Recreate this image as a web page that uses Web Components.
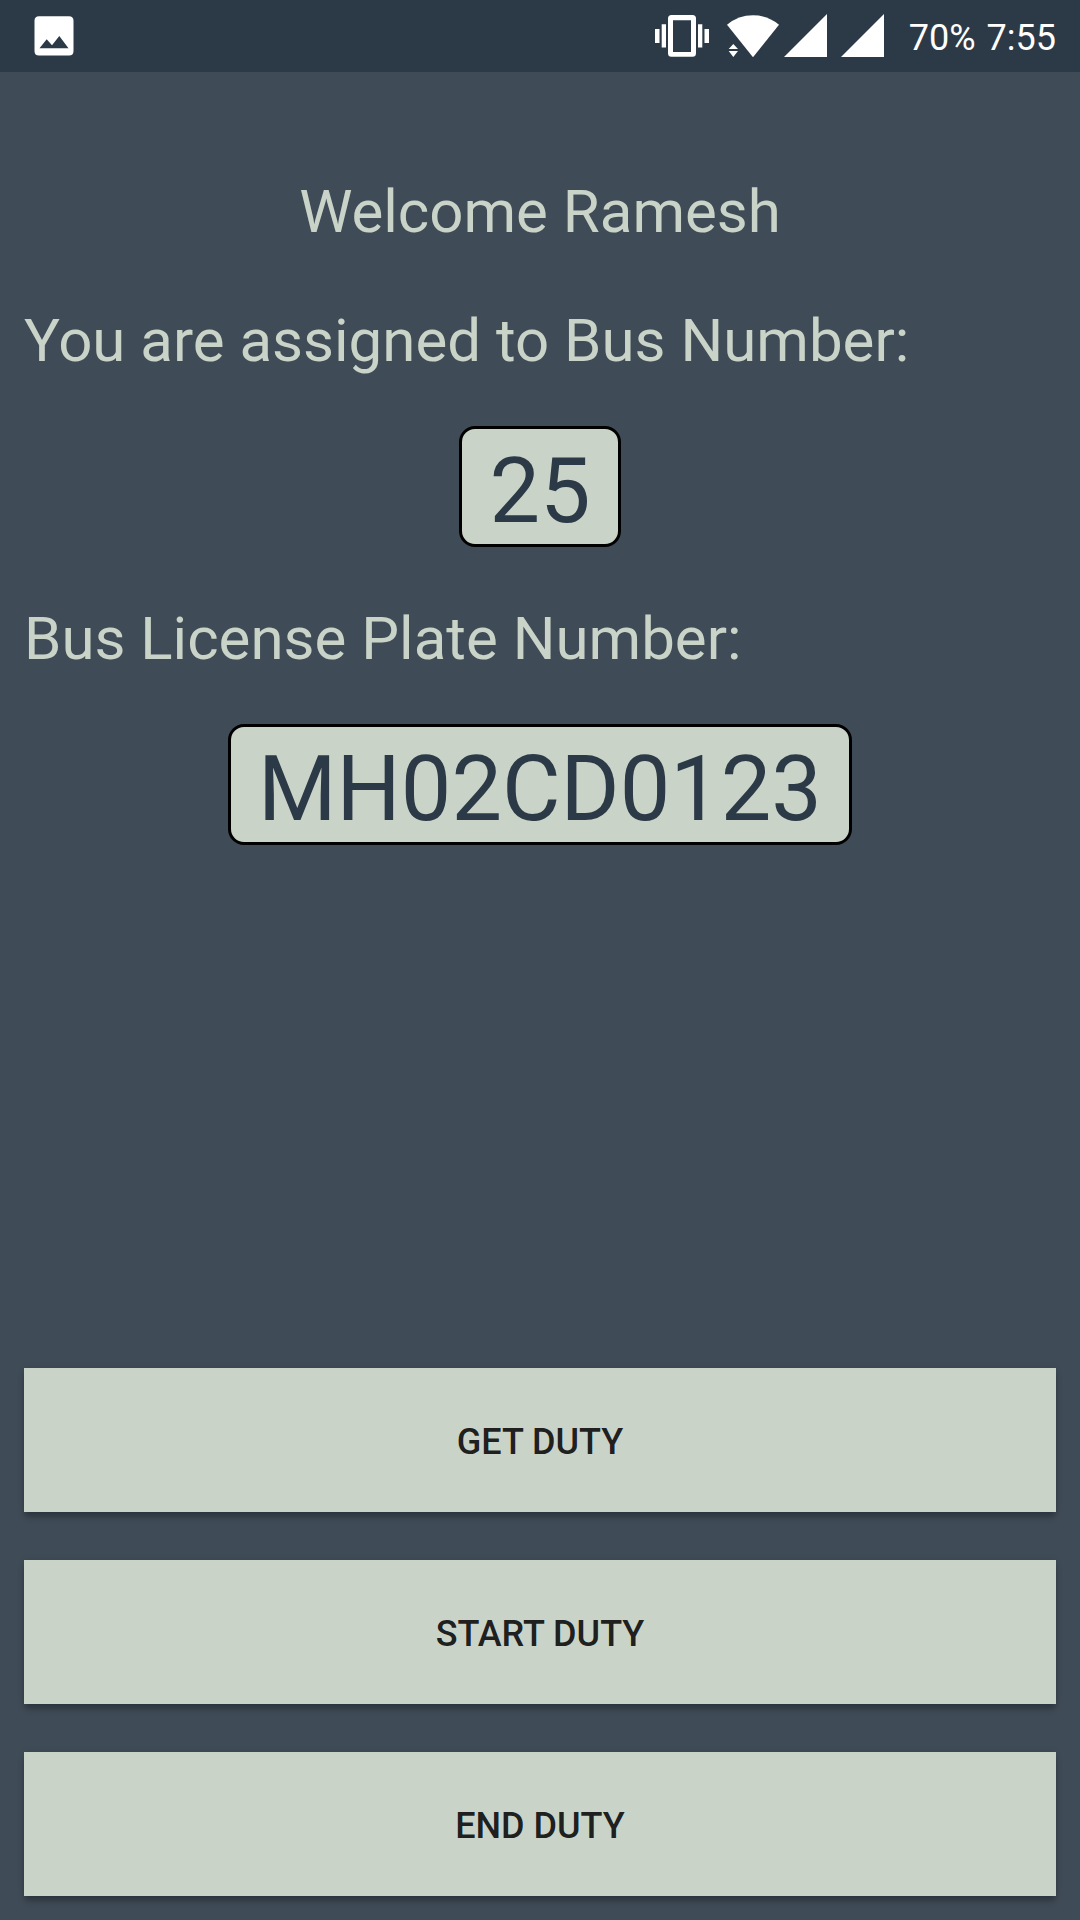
<!DOCTYPE html>
<html lang="en">
<head>
<meta charset="utf-8">
<meta name="viewport" content="width=device-width, initial-scale=1">
<title>Driver duty</title>
<style>
  :root {
    --bar: #2c3a47;
    --page: #3f4b56;
    --sage: #c9d3c8;
  }
  html, body { margin: 0; }
  body { background: var(--page); font-family: Roboto, "Noto Sans", sans-serif; }
</style>
</head>
<body>
<duty-screen></duty-screen>

<script>
  const define = (name, markup) => {
    const template = document.createElement("template");
    template.innerHTML = markup;
    customElements.define(name, class extends HTMLElement {
      constructor() {
        super();
        this.attachShadow({ mode: "open" }).append(template.content.cloneNode(true));
      }
    });
  };

  define("status-bar", `
    <style>
      :host { display: flex; align-items: center; justify-content: space-between;
              height: 72px; padding: 0 24px 0 34px; background: var(--bar); color: #fff;
              font-size: 36px; line-height: 42px; }
      svg { display: block; fill: #fff; }
      .system { display: flex; align-items: center; }
      .signals { display: flex; gap: 14px; margin: 0 25px 0 5px; }
      .wifi { margin-left: 18px; }
      .readings { display: flex; gap: 11px; padding-top: 4px; }
    </style>
    <svg width="40" height="40" viewBox="34 16 40 40" role="img" aria-label="Screenshot saved">
      <path fill-rule="evenodd" d="M39 16.3H69Q73.5 16.3 73.5 20.8V51Q73.5 55.5 69 55.5H39Q34.5 55.5 34.5 51V20.8Q34.5 16.3 39 16.3ZM39.5 48.3H68.5L59.3 36L52 45.3L46.7 39.2Z"/>
    </svg>
    <div class="system">
      <svg width="54" height="44" viewBox="655 14 54 44" role="img" aria-label="Vibrate">
        <path fill-rule="evenodd" d="M671.5 15H692.5Q696 15 696 18.5V53.3Q696 56.8 692.5 56.8H671.5Q668 56.8 668 53.3V18.5Q668 15 671.5 15ZM673 20.3V52H691V20.3Z"/>
        <path d="M661.7 24.3H666V47.5H661.7ZM655 29H659.5V43H655ZM698 24.3H702.3V47.5H698ZM704.5 29H709V43H704.5Z"/>
      </svg>
      <svg class="wifi" width="52" height="44" viewBox="727 14 52 44" role="img" aria-label="Wi-Fi">
        <path d="M753 57.2L727 24.7Q738.500 15.300 753 15.300T779 24.700Z"/>
        <path d="M733.300 44L738 49H728.700ZM728.700 51H738L733.300 57Z"/>
      </svg>
      <div class="signals">
        <svg width="43" height="44" viewBox="0 0 43 44" role="img" aria-label="Signal, first line"><path d="M0 43H43V0Z"/></svg>
        <svg width="43" height="44" viewBox="0 0 43 44" role="img" aria-label="Signal, second line"><path d="M0 43H43V0Z"/></svg>
      </div>
      <div class="readings"><span>70%</span><span>7:55</span></div>
    </div>`);

  define("screen-label", `
    <style>
      :host { display: block; padding: 9px 0 2px; color: var(--sage); font-size: 60px; line-height: 70px; }
      :host([centered]) { text-align: center; }
      p { margin: 0; }
    </style>
    <p><slot></slot></p>`);

  define("value-plate", `
    <style>
      :host { display: block; align-self: center; padding: 10px 27px 0; border: 3px solid #000;
              border-radius: 16px; background: var(--sage); color: var(--bar);
              font-size: 90px; line-height: 105px; }
    </style>
    <slot></slot>`);

  define("duty-button", `
    <style>
      :host { display: block; }
      button { display: block; box-sizing: border-box; width: 100%; height: 144px; margin: 0;
               padding: 4px 24px 0; border: 0; border-radius: 0; background: var(--sage);
               color: rgba(0, 0, 0, .87); font: 500 36px/42px Roboto, "Noto Sans", sans-serif;
               text-transform: uppercase; cursor: pointer;
               box-shadow: 0 6px 6px -1px rgba(0, 0, 0, .26), 0 0 6px rgba(0, 0, 0, .1); }
    </style>
    <button type="button"><slot></slot></button>`);

  define("duty-screen", `
    <style>
      :host { display: flex; flex-direction: column; min-height: 100vh; }
      main { flex: 1; display: flex; flex-direction: column; justify-content: space-between;
             gap: 48px; padding: 96px 24px 24px; }
      section, nav { display: flex; flex-direction: column; gap: 48px; }
    </style>
    <status-bar></status-bar>
    <main>
      <section>
        <screen-label centered>Welcome Ramesh</screen-label>
        <screen-label>You are assigned to Bus Number:</screen-label>
        <value-plate>25</value-plate>
        <screen-label>Bus License Plate Number:</screen-label>
        <value-plate>MH02CD0123</value-plate>
      </section>
      <nav aria-label="Duty actions">
        <duty-button>Get Duty</duty-button>
        <duty-button>Start Duty</duty-button>
        <duty-button>End Duty</duty-button>
      </nav>
    </main>`);
</script>
</body>
</html>
